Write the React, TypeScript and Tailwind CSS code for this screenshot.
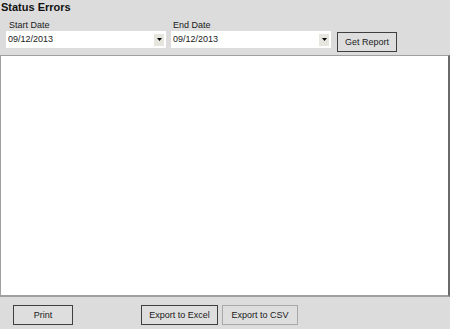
const font = { fontFamily: '"Liberation Sans", Arial, sans-serif' };

function DateBox({ value }: { value: string }) {
  return (
    <div className="flex items-center h-[17px] w-[160px] bg-white">
      <span className="flex-1 pl-[2px] text-[9px] leading-[17px] text-[#1a1a1a]">{value}</span>
      <span className="flex items-center justify-center w-[10px] h-[12px] mr-[2px] bg-[#e6e6de]">
        <svg width="5" height="3" viewBox="0 0 5 3">
          <path d="M0 0h5L2.5 3z" fill="#000" />
        </svg>
      </span>
    </div>
  );
}

function Btn({ label, width, dark = true }: { label: string; width: string; dark?: boolean }) {
  return (
    <button
      className={`block h-[20px] ${width} border ${dark ? "border-[#3f3f3f]" : "border-[#a8a8a8]"} bg-[#dedede] text-[9px] leading-[18px] text-[#1a1a1a] whitespace-nowrap`}
    >
      {label}
    </button>
  );
}

export default function App() {
  return (
    <div className="w-[450px] h-[329px] bg-[#dcdcdc] flex flex-col overflow-hidden" style={font}>
      <h1 className="h-[15px] pl-[1px] text-[11px] font-bold leading-[15px] text-[#111]">Status Errors</h1>

      <div className="flex items-start h-[29px] mt-[5px]">
        <div className="flex flex-col ml-[6px]">
          <span className="h-[11px] pl-[3px] text-[9px] leading-[11px] text-[#1a1a1a]">Start Date</span>
          <DateBox value="09/12/2013" />
        </div>
        <div className="flex flex-col ml-[5px]">
          <span className="h-[11px] pl-[2px] text-[9px] leading-[11px] text-[#1a1a1a]">End Date</span>
          <DateBox value="09/12/2013" />
        </div>
        <div className="flex ml-[6px] mt-[12px]">
          <Btn label="Get Report" width="w-[60px]" />
        </div>
      </div>

      <div className="mt-[6px] h-[242px] w-[450px] bg-white border-l border-t border-b-2 border-r-2 border-l-[#a0a0a0] border-t-[#a0a0a0] border-b-[#a0a0a0] border-r-[#6a6a6a]" />

      <div className="flex items-start mt-[8px]">
        <div className="flex ml-[13px]">
          <Btn label="Print" width="w-[60px]" />
        </div>
        <div className="flex ml-[68px]">
          <Btn label="Export to Excel" width="w-[77px]" />
        </div>
        <div className="flex ml-[4px]">
          <Btn label="Export to CSV" width="w-[76px]" dark={false} />
        </div>
      </div>
    </div>
  );
}
